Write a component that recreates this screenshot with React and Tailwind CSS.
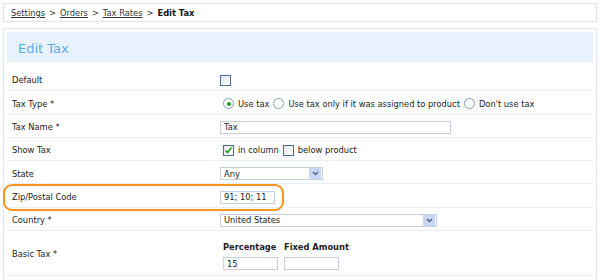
import { useState } from "react";

const FONT = { fontFamily: '"DejaVu Sans", Verdana, sans-serif' };

function Radio({ checked }) {
  return (
    <span className="inline-flex w-[11px] h-[11px] rounded-full border border-[#7f9db9] bg-white items-center justify-center mr-[4px]">
      {checked && <span className="w-[4px] h-[4px] rounded-full bg-[#21a121]" />}
    </span>
  );
}

function Check({ checked }) {
  return (
    <span className="inline-flex w-[11px] h-[11px] border border-[#4a6c93] bg-gradient-to-br from-[#e4e8ee] to-white items-center justify-center mr-[4px]">
      {checked && (
        <svg width="9" height="9" viewBox="0 0 9 9">
          <path d="M1.5 4.5 L3.5 6.5 L7.5 1.5" stroke="#21a121" strokeWidth="1.6" fill="none" />
        </svg>
      )}
    </span>
  );
}

function Select({ value, width }) {
  return (
    <div className={`flex items-center h-[13px] border border-[#c6cfe0] bg-white ${width}`}>
      <span className="flex-1 pl-[3px] leading-none">{value}</span>
      <span className="w-[12px] h-[11px] mr-px bg-[#c8d8f4] flex items-center justify-center">
        <svg width="7" height="5" viewBox="0 0 7 5">
          <path d="M1 1 L3.5 3.5 L6 1" stroke="#4d6185" strokeWidth="1.4" fill="none" />
        </svg>
      </span>
    </div>
  );
}

function Input({ value, width }) {
  return (
    <div className={`h-[13px] border border-[#c6cfe0] bg-white pl-[3px] flex items-center leading-none ${width}`}>
      {value}
    </div>
  );
}

function Row({ label, children, tall }) {
  return (
    <div className={`flex border-b border-[#e8eff7] ${tall ? "h-[45px]" : "h-[23.3px]"}`}>
      <div className="w-[213px] pl-[5px] flex items-center pt-[3px]">{label}</div>
      <div className="flex-1 flex items-center pt-[3px]">{children}</div>
    </div>
  );
}

export default function App() {
  const [rows] = useState(null);

  return (
    <div style={FONT} className="relative w-[600px] h-[280px] bg-white text-[#222] text-[8.3px] overflow-hidden pt-[3px] px-[3px]">
      {/* ===== BREADCRUMB ===== */}
      <div className="h-[19px] border border-[#dde7ed] flex items-center pl-[7px] pt-px text-[#333]">
        <span className="underline">Settings</span>
        <span className="mx-[4px]">&gt;</span>
        <span className="underline">Orders</span>
        <span className="mx-[4px]">&gt;</span>
        <span className="underline">Tax Rates</span>
        <span className="mx-[4px]">&gt;</span>
        <span className="font-bold text-[#111]">Edit Tax</span>
      </div>

      {/* ===== PANEL ===== */}
      <div className="mt-[6px] border border-[#dde7ed] px-[3px] pt-[3px] h-[260px]">
        <div className="h-[30px] bg-[#e8f2fc] flex items-center pl-[11px] pt-[4px] text-[13px] text-[#5aaae8]">
          Edit Tax
        </div>

        <div className="mt-[6px]">
          <Row label="Default">
            <Check />
          </Row>
          <Row label="Tax Type *">
            <span className="flex items-center ml-[3px]">
              <Radio checked />
              <span className="mr-[4px]">Use tax</span>
              <Radio />
              <span className="mr-[4px]">Use tax only if it was assigned to product</span>
              <Radio />
              <span>Don&apos;t use tax</span>
            </span>
          </Row>
          <Row label="Tax Name *">
            <Input value="Tax" width="w-[231px]" />
          </Row>
          <Row label="Show Tax">
            <span className="flex items-center ml-[3px]">
              <Check checked />
              <span className="mr-[4px]">in column</span>
              <Check />
              <span>below product</span>
            </span>
          </Row>
          <Row label="State">
            <Select value="Any" width="w-[103px]" />
          </Row>
          <Row label="Zip/Postal Code">
            <Input value="91; 10; 11" width="w-[55px]" />
          </Row>
          <Row label="Country *">
            <Select value="United States" width="w-[217px]" />
          </Row>
          <Row label="Basic Tax *" tall>
            <div className="flex gap-[6px] ml-[3px] pt-[2px]">
              <div className="flex flex-col gap-[4px]">
                <span className="font-bold">Percentage</span>
                <Input value="15" width="w-[55px]" />
              </div>
              <div className="flex flex-col gap-[4px]">
                <span className="font-bold">Fixed Amount</span>
                <Input value="" width="w-[55px]" />
              </div>
            </div>
          </Row>
        </div>
      </div>

      {/* highlight */}
      <div className="absolute left-[3px] top-[184px] w-[281px] h-[27px] border-2 border-[#f7941d] rounded-[9px] pointer-events-none" />
      {rows}
    </div>
  );
}
